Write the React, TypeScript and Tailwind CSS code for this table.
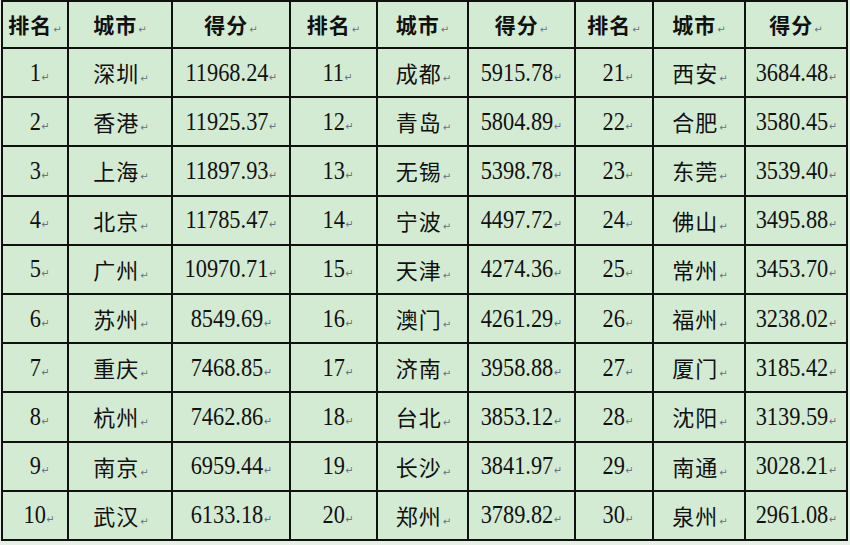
import React from 'react';

type Row = [number, string, string];

const cities: Row[] = [
  [1, '深圳', '11968.24'], [2, '香港', '11925.37'], [3, '上海', '11897.93'], [4, '北京', '11785.47'], [5, '广州', '10970.71'],
  [6, '苏州', '8549.69'], [7, '重庆', '7468.85'], [8, '杭州', '7462.86'], [9, '南京', '6959.44'], [10, '武汉', '6133.18'],
  [11, '成都', '5915.78'], [12, '青岛', '5804.89'], [13, '无锡', '5398.78'], [14, '宁波', '4497.72'], [15, '天津', '4274.36'],
  [16, '澳门', '4261.29'], [17, '济南', '3958.88'], [18, '台北', '3853.12'], [19, '长沙', '3841.97'], [20, '郑州', '3789.82'],
  [21, '西安', '3684.48'], [22, '合肥', '3580.45'], [23, '东莞', '3539.40'], [24, '佛山', '3495.88'], [25, '常州', '3453.70'],
  [26, '福州', '3238.02'], [27, '厦门', '3185.42'], [28, '沈阳', '3139.59'], [29, '南通', '3028.21'], [30, '泉州', '2961.08'],
];

const Mark = ({ big }: { big?: boolean }) => (
  <span
    className={`ml-[1px] leading-none text-gray-500 [font-family:'DejaVu_Sans',sans-serif] ${big ? 'text-[11px]' : 'text-[10px]'}`}
  >
    ↵
  </span>
);

const cell = 'bg-[#d4ebd3] flex items-center justify-center text-[#111]';

// numbers look condensed in the scan, so squeeze the whole run (mark included)
const Num = ({ v, rank }: { v: string | number; rank?: boolean }) => (
  <div className={`${cell} ${rank ? 'pl-[9px]' : ''}`}>
    <span className="inline-flex items-baseline scale-x-[0.86]">
      <span className="text-[26px] leading-none [font-family:'Liberation_Serif',serif]">{v}</span>
      <Mark big />
    </span>
  </div>
);

const City = ({ v }: { v: string }) => (
  <div className={cell}>
    <span className="inline-flex items-baseline pl-[2px]">
      <span className="text-[22px] leading-none tracking-[1px] [font-family:'Noto_Sans_CJK_SC',sans-serif]">{v}</span>
      <Mark />
    </span>
  </div>
);

const Head = ({ v }: { v: string }) => (
  <div className={cell}>
    <span className="inline-flex items-baseline">
      <span className="text-[21px] font-bold leading-none tracking-[1px] [font-family:'Noto_Sans_CJK_SC',sans-serif]">{v}</span>
      <Mark />
    </span>
  </div>
);

export default function App() {
  const rows = Array.from({ length: 10 }, (_, i) => i);
  return (
    <div className="w-[850px] h-[545px] bg-[#e6f1e5] pl-[1px] overflow-hidden">
      <div className="inline-grid grid-cols-[64px_102px_116px_85px_89px_105px_76px_90px_100px] grid-rows-[45px_repeat(10,47.2px)] gap-[2px] p-[2px] bg-[#111]">
        {[0, 1, 2].map(g => (
          <React.Fragment key={`h${g}`}>
            <Head v="排名" />
            <Head v="城市" />
            <Head v="得分" />
          </React.Fragment>
        ))}
        {rows.map(r => (
          <React.Fragment key={r}>
            {[0, 1, 2].map(g => {
              const [rank, city, score] = cities[g * 10 + r];
              return (
                <React.Fragment key={g}>
                  <Num v={rank} rank />
                  <City v={city} />
                  <Num v={score} />
                </React.Fragment>
              );
            })}
          </React.Fragment>
        ))}
      </div>
    </div>
  );
}
